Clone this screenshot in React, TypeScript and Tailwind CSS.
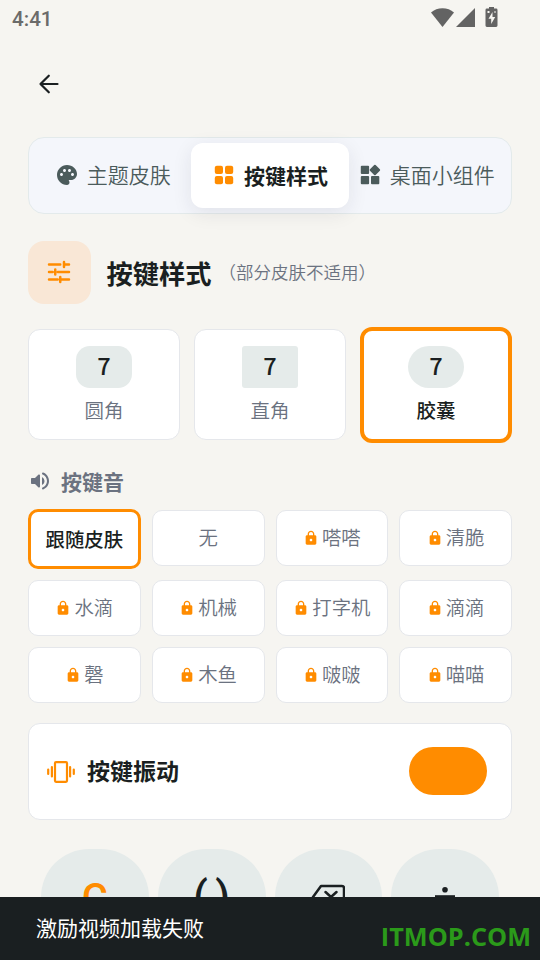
import type { ReactNode } from 'react';
import clsx from 'clsx';

const tabs = [
  { label: '主题皮肤', icon: <PaletteIcon /> },
  { label: '按键样式', icon: <GridIcon />, active: true },
  { label: '桌面小组件', icon: <WidgetsIcon /> },
];

const keyStyles = [
  { label: '圆角', shape: 'rounded-[14px]' },
  { label: '直角', shape: 'rounded-[3px]' },
  { label: '胶囊', shape: 'rounded-[21px]', active: true },
];

const sounds = [
  { label: '跟随皮肤', active: true },
  { label: '无' },
  { label: '嗒嗒', locked: true },
  { label: '清脆', locked: true },
  { label: '水滴', locked: true },
  { label: '机械', locked: true },
  { label: '打字机', locked: true },
  { label: '滴滴', locked: true },
  { label: '磬', locked: true },
  { label: '木鱼', locked: true },
  { label: '啵啵', locked: true },
  { label: '喵喵', locked: true },
];

function PaletteIcon() {
  return (
    <svg viewBox="0 0 24 24" className="size-6 shrink-0" fill="#4b5b5b">
      <path d="M12 2C6.49 2 2 6.49 2 12s4.49 10 10 10c1.38 0 2.5-1.12 2.5-2.5 0-.61-.23-1.2-.64-1.67-.08-.1-.13-.21-.13-.33 0-.28.22-.5.5-.5H16c3.31 0 6-2.69 6-6 0-4.96-4.49-9-10-9zm-5.5 11c-.83 0-1.5-.67-1.5-1.5S5.67 10 6.5 10 8 10.67 8 11.5 7.33 13 6.5 13zm3-4C8.67 9 8 8.33 8 7.5S8.67 6 9.5 6s1.5.67 1.5 1.5S10.33 9 9.5 9zm5 0c-.83 0-1.5-.67-1.5-1.5S13.67 6 14.5 6s1.5.67 1.5 1.5S15.33 9 14.5 9zm3 4c-.83 0-1.5-.67-1.5-1.5s.67-1.5 1.5-1.5 1.5.67 1.5 1.5-.67 1.5-1.5 1.5z" />
    </svg>
  );
}

function GridIcon() {
  return (
    <svg viewBox="0 0 24 24" className="mb-0.5 size-6 shrink-0" fill="#ff8c00">
      <rect x="2.8" y="2.8" width="8.2" height="8.2" rx="2" />
      <rect x="13" y="2.8" width="8.2" height="8.2" rx="2" />
      <rect x="2.8" y="13" width="8.2" height="8.2" rx="2" />
      <rect x="13" y="13" width="8.2" height="8.2" rx="2" />
    </svg>
  );
}

function WidgetsIcon() {
  return (
    <svg viewBox="0 0 24 24" className="size-6 shrink-0" fill="#4b5b5b">
      <rect x="2.8" y="2.8" width="8.3" height="8.3" rx="1" />
      <rect x="2.8" y="13" width="8.3" height="8.3" rx="1" />
      <rect x="13" y="13" width="8.3" height="8.3" rx="1" />
      <rect x="12.9" y="3" width="8" height="8" rx="1" transform="rotate(45 16.9 7)" />
    </svg>
  );
}

function LockIcon() {
  return (
    <svg viewBox="0 0 24 24" className="mt-px size-4 shrink-0" fill="#ff8c00">
      <path
        fillRule="evenodd"
        d="M18 8h-1V6c0-2.76-2.24-5-5-5S7 3.24 7 6v2H6c-1.1 0-2 .9-2 2v10c0 1.1.9 2 2 2h12c1.1 0 2-.9 2-2V10c0-1.1-.9-2-2-2zm-6 9c-1.1 0-2-.9-2-2s.9-2 2-2 2 .9 2 2-.9 2-2 2zM9 8V6c0-1.66 1.34-3 3-3s3 1.34 3 3v2H9z"
      />
    </svg>
  );
}

function StatusBar() {
  return (
    <div className="flex h-9 items-center justify-between pr-[41px] pl-3">
      <span className="mt-0.5 font-[Roboto] text-[20.6px] leading-none font-medium text-[#6b6b6a]">4:41</span>
      <svg viewBox="0 0 68 22" className="h-[22px] w-[68px]" fill="#636363">
        <path d="M0 5.5C6-.3 17-.3 23 5.5L11.5 20z" />
        <path d="M44 1v19H25z" />
        <path
          fillRule="evenodd"
          d="M58 0h5v1.5h2.1a1.4 1.4 0 0 1 1.4 1.4v15.7a1.4 1.4 0 0 1-1.4 1.4h-9.2a1.4 1.4 0 0 1-1.4-1.4V2.9a1.4 1.4 0 0 1 1.4-1.4H58zM61.5 5l-4 6.8h2.7V17l4-7h-2.7zM56.5 4v2h2V4zM63.5 4v2h1V4z"
        />
      </svg>
    </div>
  );
}

function Key({ children }: { children: ReactNode }) {
  return (
    <div className="flex h-24 items-center justify-center rounded-[48px] bg-[#e5ebea] font-[Roboto] text-[#1a1f21]">
      {children}
    </div>
  );
}

export default function App() {
  return (
    <div className="relative h-[960px] w-[540px] overflow-hidden bg-[#f6f5f1] font-['Noto_Sans_CJK_SC',sans-serif] font-[350]">
      <StatusBar />

      <header className="flex h-[101px] items-center pl-[37px]">
        <svg viewBox="0 0 24 24" className="mb-[5px] size-6" fill="none" stroke="#1a1f21" strokeWidth="2.2" strokeLinecap="round" strokeLinejoin="round">
          <path d="M20.5 12H3.5M11.8 3.7 3.5 12l8.3 8.3" />
        </svg>
      </header>

      <main className="px-7">
        <nav className="grid h-[77px] grid-cols-3 rounded-2xl border border-[#e3eaeb] bg-[#f4f6fb] p-[5px]">
          {tabs.map((tab) => (
            <div
              key={tab.label}
              className={clsx(
                'flex items-center justify-center gap-2 rounded-xl text-[21px] leading-none whitespace-nowrap',
                tab.active
                  ? 'bg-white font-bold text-[#1a1f21] shadow-[0_5px_20px_rgba(30,30,60,0.09)]'
                  : 'pb-0.5 text-[#4b5b5b] last:pr-0.5',
              )}
            >
              {tab.icon}
              <span>{tab.label}</span>
            </div>
          ))}
        </nav>

        <div className="mt-[27px] flex h-[63px] items-center">
          <div className="flex size-[63px] items-center justify-center rounded-2xl bg-[#f9e7d6]">
            <svg viewBox="0 0 24 24" className="mr-px mb-0.5 size-[30px]" fill="none" stroke="#ff8c00" strokeWidth="2" strokeLinecap="round">
              <path d="M4 6h9M17 6h3M16 4v4M4 12h3M11 12h9M9 10v4M4 18h7M13 18h7M13 16v4" />
            </svg>
          </div>
          <h1 className="mt-0.5 ml-[15.5px] text-[26.25px] leading-none font-bold text-[#1a1f21]">按键样式</h1>
          <span className="mb-px ml-[7px] text-[17.5px] leading-none text-[#6b7280]">（部分皮肤不适用）</span>
        </div>

        <div className="mt-[23px] grid grid-cols-3 items-center gap-[14px]">
          {keyStyles.map((item) => (
            <div
              key={item.label}
              className={clsx(
                'flex flex-col items-center rounded-xl bg-white',
                item.active
                  ? 'h-[116px] border-4 border-[#ff8c00] pt-[15px] font-medium text-[#1a1f21]'
                  : '-mt-px h-[111px] border-[1.5px] border-[#e5e7eb] pt-4 text-[#6b7280]',
              )}
            >
              <div
                className={clsx(
                  'flex h-[42px] w-14 items-center justify-center bg-[#e5ebea] pb-0.5 text-[23.5px] leading-none font-medium text-[#1a1f21]',
                  item.shape,
                )}
              >
                7
              </div>
              <span className="mt-3 text-[19.5px] leading-none">{item.label}</span>
            </div>
          ))}
        </div>

        <div className="mt-[23px] flex h-[30px] items-center gap-[9px] text-[#6b7280]">
          <svg viewBox="0 0 24 24" className="size-6" fill="#6b7280">
            <path d="M3 10v4c0 .55.45 1 1 1h3l3.29 3.29c.63.63 1.71.18 1.71-.71V6.41c0-.89-1.08-1.34-1.71-.71L7 9H4c-.55 0-1 .45-1 1zm13.5 2A4.5 4.5 0 0 0 14 7.97v8.05c1.48-.73 2.5-2.25 2.5-4.02zM14 4.45v.2c0 .38.25.71.6.85C17.18 6.53 19 9.06 19 12s-1.82 5.47-4.4 6.5c-.36.14-.6.47-.6.85v.2c0 .63.63 1.07 1.21.85C18.6 19.11 21 15.84 21 12s-2.4-7.11-5.79-8.4c-.58-.23-1.21.22-1.21.85z" />
          </svg>
          <h2 className="text-[21px] leading-none font-bold">按键音</h2>
        </div>

        <div className="mt-[14px] grid grid-cols-4 items-start gap-[11px]">
          {sounds.map((sound) => (
            <div
              key={sound.label}
              className={clsx(
                'flex items-center justify-center gap-[3px] rounded-[10px] bg-white text-[19.4px] leading-none whitespace-nowrap',
                sound.active
                  ? '-mt-px h-[60px] border-[3px] border-[#ff8c00] font-medium text-[#1a1f21]'
                  : 'h-14 border-[1.5px] border-[#e5e7eb] pb-0.5 text-[#6b7280]',
              )}
            >
              {sound.locked && <LockIcon />}
              <span>{sound.label}</span>
            </div>
          ))}
        </div>

        <div className="mt-5 flex h-[97px] items-center rounded-xl border border-[#e5e7eb] bg-white pr-6 pb-px pl-[18px]">
          <svg viewBox="0 0 28 22" className="mt-px h-[22px] w-7" fill="none" stroke="#ff8c00" strokeWidth="2.2" strokeLinecap="round">
            <rect x="8" y="1.2" width="12" height="19.6" rx="1" />
            <path d="M1.2 8.5v4.5M4.9 6v9.5M23.1 6v9.5M26.8 8.5v4.5" />
          </svg>
          <span className="mb-0.5 ml-3 flex-1 text-[23px] leading-none font-bold text-[#1a1f21]">按键振动</span>
          <div className="mb-px h-12 w-[78px] rounded-full bg-[#ff8c00]" />
        </div>

        <div className="mt-[29px] grid grid-cols-4 gap-[9px] px-[13px]">
          <Key>
            <span className="mt-1 text-[40px] leading-none font-medium text-[#ff8c00]">C</span>
          </Key>
          <Key>
            <span className="text-[42px] leading-none font-medium [word-spacing:-3px]">( )</span>
          </Key>
          <Key>
            <svg viewBox="0 0 34 26" className="h-[26px] w-[34px]" fill="none" stroke="#1a1f21" strokeWidth="2.5" strokeLinecap="round" strokeLinejoin="round">
              <path d="M10 2h21a2 2 0 0 1 2 2v18a2 2 0 0 1-2 2H10L2 13zM14.5 8l11 10M25.5 8l-11 10" />
            </svg>
          </Key>
          <Key>
            <svg viewBox="0 0 20 20" className="size-5" fill="#1a1f21">
              <circle cx="10" cy="2.8" r="2.8" />
              <rect y="8.2" width="20" height="3.4" />
              <circle cx="10" cy="17.2" r="2.8" />
            </svg>
          </Key>
        </div>
      </main>

      <div className="absolute inset-x-0 bottom-0 flex h-[63px] items-center justify-between bg-[#1a1f21] pr-[9px] pl-9">
        <span className="mb-0.5 text-[21px] leading-none font-normal text-white">激励视频加载失败</span>
        <span className="mt-4 font-['Open_Sans'] text-[25.3px] leading-none font-bold text-[#2b9a1a]">ITMOP.COM</span>
      </div>
    </div>
  );
}
